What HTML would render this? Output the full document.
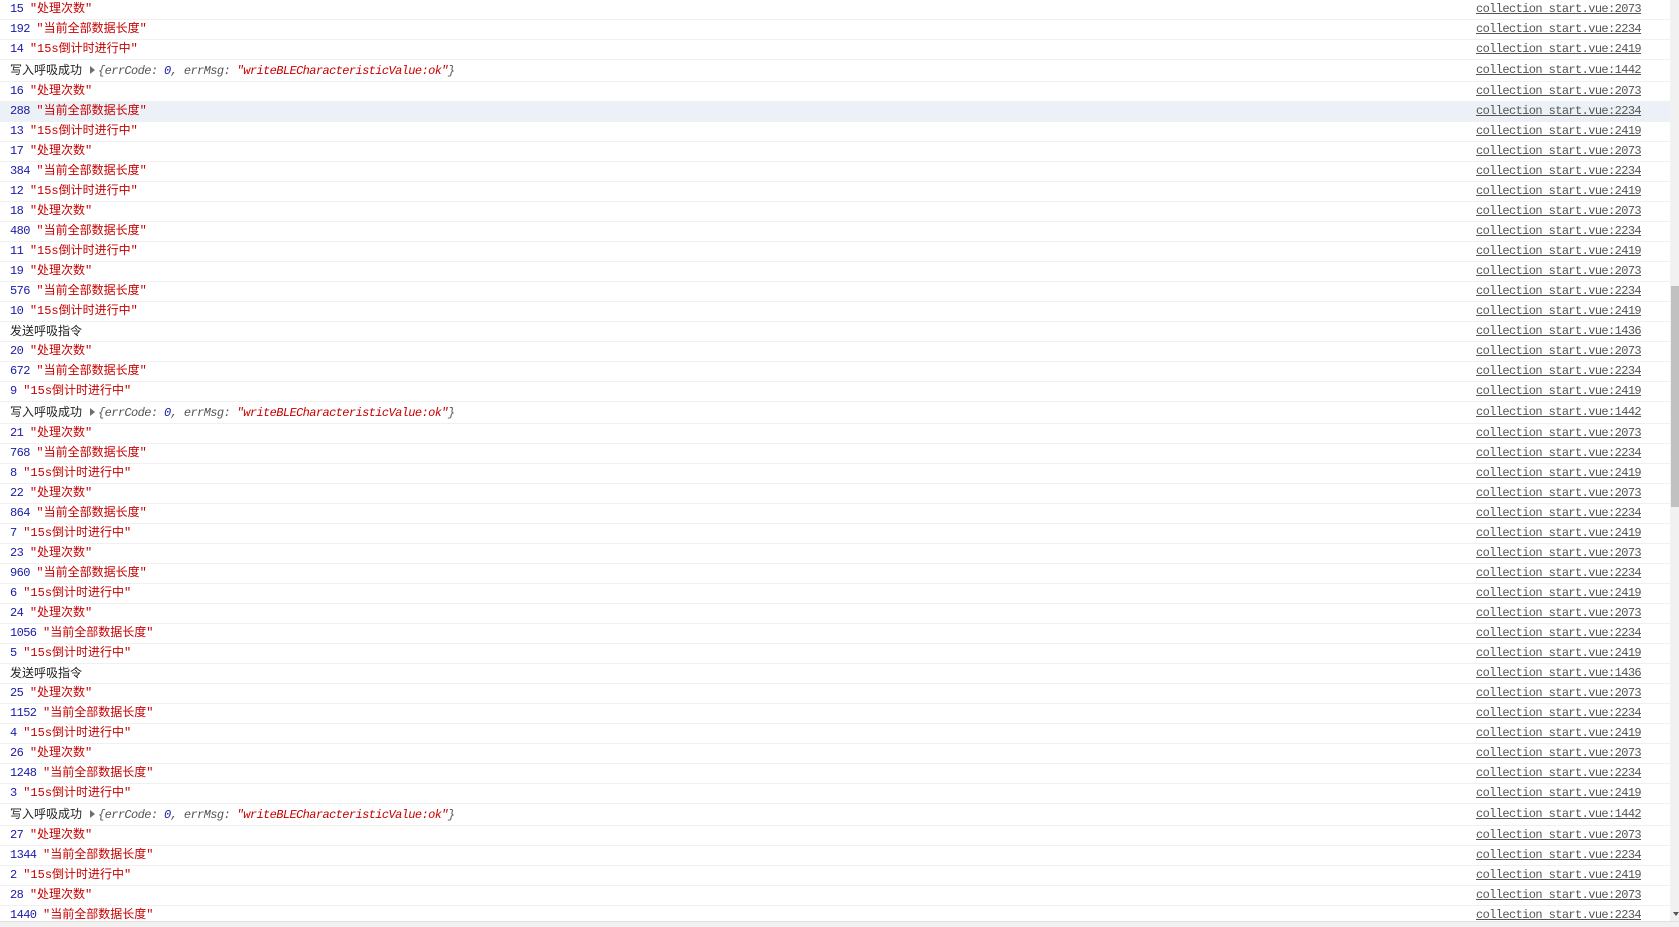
<!DOCTYPE html>
<html><head><meta charset="utf-8"><style>
html,body{margin:0;padding:0;background:#fff;width:1679px;height:926px;overflow:hidden}
#c{position:absolute;left:0;top:0px;width:1670px}
.r{height:19px;line-height:19px;border-bottom:1px solid #f0f0f0;position:relative;font-family:"Liberation Mono","Noto Sans CJK SC",monospace;font-size:12px;letter-spacing:-0.6px;padding-left:10px;white-space:nowrap;color:#222}
.r.o{height:21px;line-height:21px}
.r.h{background:#ecf1f8}
.n{color:#1a1aa6}
.s{color:#c80000;letter-spacing:0}
.os{color:#c80000}
.z{font-family:"Liberation Sans","Noto Sans CJK SC",sans-serif;letter-spacing:0;font-size:12px;color:#222}
.ob{color:#555;font-style:italic}
.tri{display:inline-block;width:0;height:0;border-left:5px solid #6e6e6e;border-top:4px solid transparent;border-bottom:4px solid transparent;margin:0 3px 0 8px;vertical-align:0px}
.l{position:absolute;left:1476px;top:0;color:#555;text-decoration:underline}
#vs{position:absolute;left:1670px;top:0;width:9px;height:926px;background:#f1f1f1}
#th{position:absolute;left:1671px;top:286px;width:8px;height:221px;background:#c1c1c1}
#hs{position:absolute;left:0;top:921px;width:1679px;height:5px;background:#f1f1f1;border-top:1px solid #e0e0e0}
#ar{position:absolute;left:1673px;top:912px;width:0;height:0;border-top:4px solid #555;border-left:3px solid transparent;border-right:3px solid transparent}
</style></head><body>
<div id="c">
<div class="r"><span class="n">15</span> <span class="s">"处理次数"</span><span class="l">collection start.vue:2073</span></div>
<div class="r"><span class="n">192</span> <span class="s">"当前全部数据长度"</span><span class="l">collection start.vue:2234</span></div>
<div class="r"><span class="n">14</span> <span class="s">"15s倒计时进行中"</span><span class="l">collection start.vue:2419</span></div>
<div class="r o"><span class="z">写入呼吸成功</span><span class="tri"></span><span class="ob">{errCode: <span class="n">0</span>, errMsg: <span class="os">"writeBLECharacteristicValue:ok"</span>}</span><span class="l">collection start.vue:1442</span></div>
<div class="r"><span class="n">16</span> <span class="s">"处理次数"</span><span class="l">collection start.vue:2073</span></div>
<div class="r h"><span class="n">288</span> <span class="s">"当前全部数据长度"</span><span class="l">collection start.vue:2234</span></div>
<div class="r"><span class="n">13</span> <span class="s">"15s倒计时进行中"</span><span class="l">collection start.vue:2419</span></div>
<div class="r"><span class="n">17</span> <span class="s">"处理次数"</span><span class="l">collection start.vue:2073</span></div>
<div class="r"><span class="n">384</span> <span class="s">"当前全部数据长度"</span><span class="l">collection start.vue:2234</span></div>
<div class="r"><span class="n">12</span> <span class="s">"15s倒计时进行中"</span><span class="l">collection start.vue:2419</span></div>
<div class="r"><span class="n">18</span> <span class="s">"处理次数"</span><span class="l">collection start.vue:2073</span></div>
<div class="r"><span class="n">480</span> <span class="s">"当前全部数据长度"</span><span class="l">collection start.vue:2234</span></div>
<div class="r"><span class="n">11</span> <span class="s">"15s倒计时进行中"</span><span class="l">collection start.vue:2419</span></div>
<div class="r"><span class="n">19</span> <span class="s">"处理次数"</span><span class="l">collection start.vue:2073</span></div>
<div class="r"><span class="n">576</span> <span class="s">"当前全部数据长度"</span><span class="l">collection start.vue:2234</span></div>
<div class="r"><span class="n">10</span> <span class="s">"15s倒计时进行中"</span><span class="l">collection start.vue:2419</span></div>
<div class="r"><span class="z">发送呼吸指令</span><span class="l">collection start.vue:1436</span></div>
<div class="r"><span class="n">20</span> <span class="s">"处理次数"</span><span class="l">collection start.vue:2073</span></div>
<div class="r"><span class="n">672</span> <span class="s">"当前全部数据长度"</span><span class="l">collection start.vue:2234</span></div>
<div class="r"><span class="n">9</span> <span class="s">"15s倒计时进行中"</span><span class="l">collection start.vue:2419</span></div>
<div class="r o"><span class="z">写入呼吸成功</span><span class="tri"></span><span class="ob">{errCode: <span class="n">0</span>, errMsg: <span class="os">"writeBLECharacteristicValue:ok"</span>}</span><span class="l">collection start.vue:1442</span></div>
<div class="r"><span class="n">21</span> <span class="s">"处理次数"</span><span class="l">collection start.vue:2073</span></div>
<div class="r"><span class="n">768</span> <span class="s">"当前全部数据长度"</span><span class="l">collection start.vue:2234</span></div>
<div class="r"><span class="n">8</span> <span class="s">"15s倒计时进行中"</span><span class="l">collection start.vue:2419</span></div>
<div class="r"><span class="n">22</span> <span class="s">"处理次数"</span><span class="l">collection start.vue:2073</span></div>
<div class="r"><span class="n">864</span> <span class="s">"当前全部数据长度"</span><span class="l">collection start.vue:2234</span></div>
<div class="r"><span class="n">7</span> <span class="s">"15s倒计时进行中"</span><span class="l">collection start.vue:2419</span></div>
<div class="r"><span class="n">23</span> <span class="s">"处理次数"</span><span class="l">collection start.vue:2073</span></div>
<div class="r"><span class="n">960</span> <span class="s">"当前全部数据长度"</span><span class="l">collection start.vue:2234</span></div>
<div class="r"><span class="n">6</span> <span class="s">"15s倒计时进行中"</span><span class="l">collection start.vue:2419</span></div>
<div class="r"><span class="n">24</span> <span class="s">"处理次数"</span><span class="l">collection start.vue:2073</span></div>
<div class="r"><span class="n">1056</span> <span class="s">"当前全部数据长度"</span><span class="l">collection start.vue:2234</span></div>
<div class="r"><span class="n">5</span> <span class="s">"15s倒计时进行中"</span><span class="l">collection start.vue:2419</span></div>
<div class="r"><span class="z">发送呼吸指令</span><span class="l">collection start.vue:1436</span></div>
<div class="r"><span class="n">25</span> <span class="s">"处理次数"</span><span class="l">collection start.vue:2073</span></div>
<div class="r"><span class="n">1152</span> <span class="s">"当前全部数据长度"</span><span class="l">collection start.vue:2234</span></div>
<div class="r"><span class="n">4</span> <span class="s">"15s倒计时进行中"</span><span class="l">collection start.vue:2419</span></div>
<div class="r"><span class="n">26</span> <span class="s">"处理次数"</span><span class="l">collection start.vue:2073</span></div>
<div class="r"><span class="n">1248</span> <span class="s">"当前全部数据长度"</span><span class="l">collection start.vue:2234</span></div>
<div class="r"><span class="n">3</span> <span class="s">"15s倒计时进行中"</span><span class="l">collection start.vue:2419</span></div>
<div class="r o"><span class="z">写入呼吸成功</span><span class="tri"></span><span class="ob">{errCode: <span class="n">0</span>, errMsg: <span class="os">"writeBLECharacteristicValue:ok"</span>}</span><span class="l">collection start.vue:1442</span></div>
<div class="r"><span class="n">27</span> <span class="s">"处理次数"</span><span class="l">collection start.vue:2073</span></div>
<div class="r"><span class="n">1344</span> <span class="s">"当前全部数据长度"</span><span class="l">collection start.vue:2234</span></div>
<div class="r"><span class="n">2</span> <span class="s">"15s倒计时进行中"</span><span class="l">collection start.vue:2419</span></div>
<div class="r"><span class="n">28</span> <span class="s">"处理次数"</span><span class="l">collection start.vue:2073</span></div>
<div class="r"><span class="n">1440</span> <span class="s">"当前全部数据长度"</span><span class="l">collection start.vue:2234</span></div>
</div>
<div id="vs"></div><div id="th"></div><div id="ar"></div>
<div id="hs"></div>
</body></html>
